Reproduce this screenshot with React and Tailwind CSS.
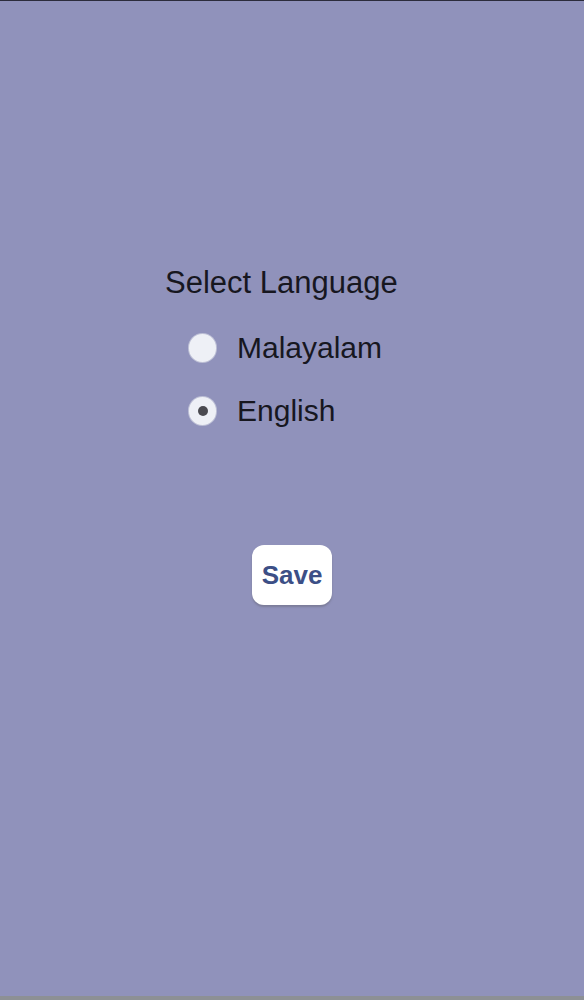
import { useState } from 'react';

const languages = ['Malayalam', 'English'];

function Radio({ checked }) {
  return (
    <span className="w-[27px] h-[28px] rounded-full bg-[#eef0f6] shadow-[0_0_0_1px_rgba(200,202,220,0.8)] flex items-center justify-center shrink-0">
      {checked && <span className="w-[10px] h-[10px] rounded-full bg-[#4a4a50]" />}
    </span>
  );
}

export default function App() {
  const [lang, setLang] = useState('English');

  return (
    <div
      className="h-[1000px] bg-[#9092bb] flex flex-col border-t border-[#2c2c3c] border-b-[4px] border-b-[#8d9095] overflow-hidden"
      style={{ fontFamily: '"Liberation Sans", Arial, sans-serif' }}
    >
      <div className="pt-[266px] pl-[165px]">
        <h1 className="text-[31px] leading-[31px] text-[#17171f]">Select Language</h1>
      </div>

      <div className="pl-[189px] mt-[35px] flex flex-col gap-[33px]">
        {languages.map(l => (
          <button
            key={l}
            onClick={() => setLang(l)}
            className="flex items-center gap-[21px] h-[30px] text-left"
          >
            <Radio checked={lang === l} />
            <span className="text-[30px] leading-[30px] text-[#17171f]">{l}</span>
          </button>
        ))}
      </div>

      <div className="flex justify-center mt-[119px]">
        <button className="w-[80px] h-[60px] bg-white rounded-[12px] shadow-[0_2px_2px_rgba(110,110,130,0.6)] text-[26px] font-bold text-[#3c4f86]">
          Save
        </button>
      </div>
    </div>
  );
}
